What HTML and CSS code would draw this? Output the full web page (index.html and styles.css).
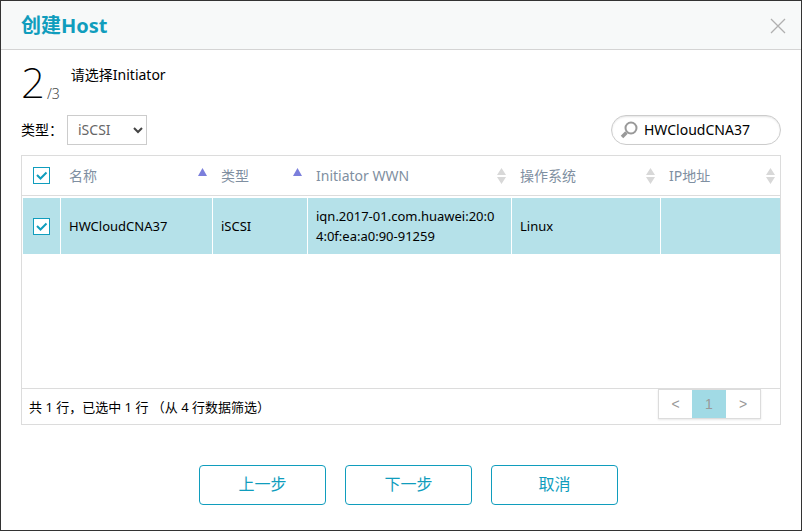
FILE: index.html
```html
<!DOCTYPE html>
<html lang="zh-CN">
<head>
<meta charset="utf-8">
<meta name="viewport" content="width=device-width, initial-scale=1">
<title>创建Host</title>
<link rel="stylesheet" href="styles.css">
</head>
<body>
<main class="dialog">
  <header class="dialog-header">
    <h1 class="dialog-title">创建Host</h1>
    <button type="button" class="close" aria-label="关闭">
      <svg width="16" height="16" viewBox="0 0 16 16"><path d="M1 1 15 15M15 1 1 15"/></svg>
    </button>
  </header>
  <div class="dialog-body">
    <div class="step">
      <span class="step-current">2</span>
      <span class="step-total">/3</span>
      <p class="step-text">请选择Initiator</p>
    </div>
    <div class="toolbar">
      <label class="filter-label" for="type">类型：</label>
      <span class="select-wrap">
        <select id="type" class="filter-select"><option>iSCSI</option></select>
        <svg class="chevron" width="10" height="7" viewBox="0 0 10 7"><path d="M1 1 5 5 9 1"/></svg>
      </span>
      <label class="search">
        <svg width="18" height="18" viewBox="0 0 18 18" aria-hidden="true"><circle cx="11" cy="7" r="5.5"/><path class="handle" d="M6.500 11.500 2 16"/></svg>
        <input type="text" class="search-input" value="HWCloudCNA37" aria-label="搜索">
      </label>
    </div>
    <section class="grid">
      <div class="grid-scroll">
        <table class="table">
          <colgroup><col class="c-check"><col class="c-name"><col class="c-type"><col class="c-wwn"><col class="c-os"><col class="c-ip"></colgroup>
          <thead>
            <tr>
              <th class="check-cell"><input type="checkbox" class="check" checked aria-label="全选"></th>
              <th><div class="head">名称<svg class="sorted" width="9" height="8" viewBox="0 0 9 8"><path d="M4.500 0 9 8H0z"/></svg></div></th>
              <th><div class="head">类型<svg class="sorted" width="9" height="8" viewBox="0 0 9 8"><path d="M4.500 0 9 8H0z"/></svg></div></th>
              <th><div class="head">Initiator WWN<svg class="unsorted" width="9" height="16" viewBox="0 0 9 16"><path d="M4.500 0 9 7H0zM0 9H9L4.500 16z"/></svg></div></th>
              <th><div class="head">操作系统<svg class="unsorted" width="9" height="16" viewBox="0 0 9 16"><path d="M4.500 0 9 7H0zM0 9H9L4.500 16z"/></svg></div></th>
              <th><div class="head">IP地址<svg class="unsorted" width="9" height="16" viewBox="0 0 9 16"><path d="M4.500 0 9 7H0zM0 9H9L4.500 16z"/></svg></div></th>
            </tr>
          </thead>
          <tbody>
            <tr>
              <td class="check-cell"><input type="checkbox" class="check" checked aria-label="选择 HWCloudCNA37"></td>
              <td>HWCloudCNA37</td>
              <td>iSCSI</td>
              <td class="wwn">iqn.2017-01.com.huawei:20:04:0f:ea:a0:90-91259</td>
              <td>Linux</td>
              <td></td>
            </tr>
          </tbody>
        </table>
      </div>
      <footer class="grid-footer">
        <span>共 1 行，已选中 1 行 （从 4 行数据筛选）</span>
        <nav class="pager" aria-label="分页">
          <button type="button" class="page">&lt;</button>
          <button type="button" class="page page-current">1</button>
          <button type="button" class="page">&gt;</button>
        </nav>
      </footer>
    </section>
    <div class="actions">
      <button type="button" class="btn">上一步</button>
      <button type="button" class="btn">下一步</button>
      <button type="button" class="btn">取消</button>
    </div>
  </div>
</main>
</body>
</html>
```

FILE: styles.css
```css
* { box-sizing: border-box; }

body {
  margin: 0;
  font-family: "Noto Sans", "Noto Sans CJK SC", sans-serif;
  font-size: 13px;
  line-height: 20px;
  color: #000;
}

button, input, select { font: inherit; }

.dialog {
  display: flex;
  flex-direction: column;
  min-height: 100vh;
  border: 1px solid #333;
  background: #fff;
}

.dialog-header {
  display: flex;
  align-items: center;
  justify-content: space-between;
  height: 49px;
  padding: 2px 15px 0 20px;
  border-bottom: 1px solid #d4d4d4;
  background: #f7f9f9;
}

.dialog-title {
  margin: 0;
  font-size: 20px;
  line-height: 28px;
  font-weight: 700;
  color: #109dbd;
}

.close {
  display: flex;
  padding: 0;
  border: 0;
  background: none;
}

.close svg { fill: none; stroke: #b0b0b0; stroke-width: 1.3; }

.dialog-body {
  display: flex;
  flex-direction: column;
  flex: 1;
  padding: 12px 20px 25px;
}

.step {
  display: flex;
  align-items: flex-end;
  height: 42px;
}

.step-current {
  font-size: 42px;
  line-height: 44px;
  font-weight: 200;
}

.step-total {
  margin-left: 2px;
  font-size: 14px;
  font-weight: 300;
  color: #444;
}

.step-text {
  align-self: flex-start;
  margin: 3px 0 0 11px;
  font-size: 14px;
}

.toolbar {
  display: flex;
  align-items: center;
  height: 30px;
  margin-top: 11px;
}

.filter-label { width: 46px; font-size: 14px; white-space: nowrap; }

.select-wrap { display: grid; align-items: center; }

.filter-select {
  grid-area: 1 / 1;
  width: 80px;
  height: 30px;
  padding: 0 10px;
  border: 1px solid #ccc;
  border-radius: 0;
  background: #fff;
  appearance: none;
  font-size: 14px;
  color: #666;
}

.chevron {
  grid-area: 1 / 1;
  justify-self: end;
  margin-right: 4px;
  fill: none;
  stroke: #444;
  stroke-width: 2;
  pointer-events: none;
}

.search {
  display: flex;
  align-items: center;
  gap: 6px;
  width: 170px;
  height: 30px;
  margin-left: auto;
  padding: 0 8px;
  border: 1px solid #ccc;
  border-radius: 15px;
  box-shadow: inset 0 1px 2px #e4e4e4;
}

.search svg { flex: none; fill: none; stroke: #999; stroke-width: 2; }
.search .handle { stroke-width: 3.500; }

.search-input {
  flex: 1;
  min-width: 0;
  padding: 0;
  border: 0;
  outline: 0;
  background: none;
  font-size: 14px;
}

.grid {
  display: flex;
  flex-direction: column;
  flex: 1;
  margin-top: 10px;
  border: 1px solid #dcdcdc;
}

.grid-scroll { flex: 1; }

.table {
  width: 100%;
  border-collapse: separate;
  border-spacing: 0;
  table-layout: fixed;
}

.c-check { width: 39px; }
.c-name { width: auto; }
.c-type { width: 95px; }
.c-wwn { width: 204px; }
.c-os { width: 149px; }
.c-ip { width: 119px; }

th {
  height: 40px;
  padding: 0 6px 0 8px;
  border-bottom: 1px solid #dcdcdc;
  font-size: 14px;
  font-weight: 400;
  text-align: left;
  color: #7f8fa1;
}

th:last-child { padding-right: 5px; }

.head {
  display: flex;
  align-items: center;
  justify-content: space-between;
  white-space: nowrap;
}

.sorted { margin-bottom: 8px; fill: #7b7fdc; }
.unsorted { fill: #d8d8d8; }

td {
  height: 58px;
  padding: 0 8px;
  border-top: 2px solid #fff;
  border-right: 1px solid #fff;
  background: #b5e1e9;
  background-clip: padding-box;
}

td:first-child { border-left: 1px solid #fff; }
td:last-child { border-right: 0; }
.wwn { word-break: break-all; }

.check-cell { padding: 0 0 0 11px; }
td.check-cell { padding-left: 10px; }

.check {
  display: block;
  width: 17px;
  height: 17px;
  margin: 0;
  border: 1px solid #109dbd;
  appearance: none;
  background: #fff url("data:image/svg+xml,%3Csvg xmlns='http://www.w3.org/2000/svg' viewBox='0 0 15 15'%3E%3Cpath d='M3 7l3.500 3.500L12.500 4.500' fill='none' stroke='%23109dbd' stroke-width='2'/%3E%3C/svg%3E") center / 15px 15px no-repeat;
}

.grid-footer {
  display: flex;
  align-items: flex-start;
  justify-content: space-between;
  height: 36px;
  padding: 0 19px 0 7px;
  border-top: 1px solid #dcdcdc;
  line-height: 36px;
}

.pager {
  display: flex;
  border: 1px solid #dcdcdc;
  box-shadow: 0 1px 2px #e8e8e8;
}

.page {
  width: 34px;
  height: 28px;
  padding: 0;
  border: 0;
  background: #fff;
  font-family: "Liberation Sans", sans-serif;
  font-size: 14px;
  line-height: 28px;
  color: #999;
}

.page-current { background: #a1dae5; }
.page:first-child { width: 33px; }

.actions {
  display: flex;
  justify-content: center;
  gap: 19px;
  padding: 40px 0 0 15px;
}

.btn {
  width: 127px;
  height: 40px;
  padding: 0 0 2px;
  border: 1px solid #109dbd;
  border-radius: 4px;
  background: #fff;
  font-size: 16px;
  color: #109dbd;
}
```
